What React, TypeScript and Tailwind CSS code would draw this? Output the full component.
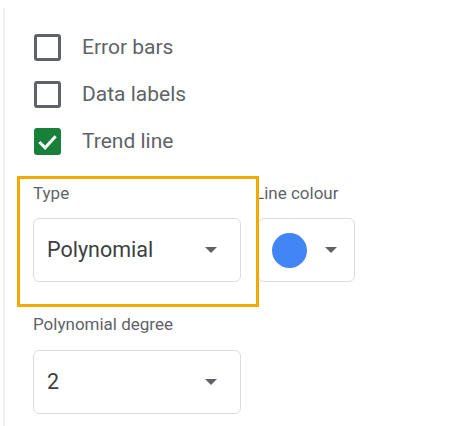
import React from "react";

const font = { fontFamily: "Roboto, 'Liberation Sans', Arial, sans-serif" };

function Caret() {
    return (
        <svg width="12" height="6" viewBox="0 0 12 6" className="shrink-0">
            <path d="M0 0 L12 0 L6 6 Z" fill="#5f6368" />
        </svg>
    );
}

function Checkbox({ label, checked }: { label: string; checked?: boolean }) {
    return (
        <div className="flex items-center h-[47px]">
            {checked ? (
                <div className="w-[27px] h-[27px] rounded-[3px] bg-[#188038] flex items-center justify-center">
                    <svg width="23" height="23" viewBox="0 0 24 24">
                        <path d="M3.5 12.5 L9.5 18.5 L20.5 6.5" fill="none" stroke="#fff" strokeWidth="3.2" />
                    </svg>
                </div>
            ) : (
                <div className="w-[27px] h-[27px] rounded-[3px] border-[3px] border-[#5f6368]" />
            )}
            <span className="ml-[21px] text-[21px] text-[#5f6368] leading-none">{label}</span>
        </div>
    );
}

export default function App() {
    return (
        <div className="relative w-[474px] h-[426px] bg-white overflow-hidden" style={font}>
            <div className="absolute left-[3px] top-[8px] bottom-0 w-[2px] bg-[#efefef]" />
            <div className="flex flex-col pl-[34px] pt-[24px]">
                <Checkbox label="Error bars" />
                <Checkbox label="Data labels" />
                <Checkbox label="Trend line" checked />

                <div className="flex gap-[17px] mt-[19px] -ml-px">
                    <div className="flex flex-col w-[208px]">
                        <span className="h-[20px] flex items-center text-[17px] text-[#5f6368]">Type</span>
                        <div className="mt-[14px] h-[64px] border border-[#dadce0] rounded-[6px] flex items-center pl-[13px] pr-[23px] justify-between">
                            <span className="text-[21.5px] text-[#3c4043]">Polynomial</span>
                            <Caret />
                        </div>
                    </div>
                    <div className="flex flex-col w-[97px]">
                        <span className="-ml-[3px] h-[20px] flex items-center text-[17px] text-[#5f6368] whitespace-nowrap">Line colour</span>
                        <div className="mt-[14px] h-[64px] border border-[#dadce0] rounded-[6px] flex items-center pl-[13px] pr-[17px] justify-between">
                            <div className="w-[35px] h-[35px] rounded-full bg-[#4285f4]" />
                            <Caret />
                        </div>
                    </div>
                </div>

                <span className="mt-[33px] -ml-px h-[20px] flex items-center text-[17px] text-[#5f6368]">Polynomial degree</span>
                <div className="mt-[15px] -ml-px w-[208px] h-[64px] border border-[#dadce0] rounded-[6px] flex items-center pl-[13px] pr-[23px] justify-between">
                    <span className="text-[21.5px] text-[#3c4043]">2</span>
                    <Caret />
                </div>
            </div>
            <div className="absolute left-[17px] top-[176px] w-[242px] h-[131px] border-[3px] border-[#f4a900] pointer-events-none" />
        </div>
    );
}
